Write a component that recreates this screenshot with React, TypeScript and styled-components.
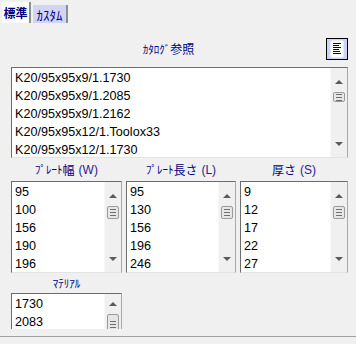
import styled, { createGlobalStyle } from "styled-components";

const GlobalStyle = createGlobalStyle`
  html, body {
    margin: 0;
    padding: 0;
    background: #f0f0f0;
  }
`;

const Window = styled.div`
  width: 356px;
  height: 344px;
  background: #f0f0f0;
  display: flex;
  flex-direction: column;
  overflow: hidden;
  font-family: "Liberation Sans", Arial, sans-serif;
`;

const TabStrip = styled.div`
  height: 23px;
  flex: none;
  display: flex;
  align-items: flex-end;
  gap: 2px;
  padding-left: 2px;
`;

const Tab = styled.div<{ $active?: boolean }>`
  box-sizing: border-box;
  height: ${(p) => (p.$active ? "21px" : "18px")};
  width: ${(p) => (p.$active ? "29px" : "35px")};
  display: flex;
  align-items: center;
  justify-content: center;
  background: ${(p) => (p.$active ? "#ffffff" : "#d0d4f6")};
  border-right: 2px solid #8e8e8e;
  color: #000080;
  font-family: "Noto Sans CJK JP", sans-serif;
  font-size: ${(p) => (p.$active ? "12px" : "13px")};
  font-weight: ${(p) => (p.$active ? 700 : 400)};
`;

const Content = styled.div`
  flex: none;
  display: flex;
  flex-direction: column;
  padding: 0 8px 0 11px;
`;

const CatalogHead = styled.div`
  height: 44px;
  box-sizing: border-box;
  padding: 15px 0 7px;
  display: flex;
  align-items: center;
`;

const Label = styled.div<{ $h?: number; $grow?: boolean }>`
  flex: ${(p) => (p.$grow ? "1" : "none")};
  height: ${(p) => p.$h ?? 22}px;
  display: flex;
  align-items: center;
  justify-content: center;
  color: #000080;
  font-family: "Noto Sans CJK JP", sans-serif;
  font-size: 11px;
  line-height: 1;
`;

const Kanji = styled.span`
  font-size: 12px;
`;

const Paren = styled.span`
  font-family: "Liberation Sans", Arial, sans-serif;
  font-size: 12px;
  color: #2a1896;
  margin-left: 4px;
`;

const IconButton = styled.div`
  width: 22px;
  height: 22px;
  box-sizing: border-box;
  border: 1px solid #000;
  background: #cdd3f7;
  display: flex;
  align-items: center;
  justify-content: center;
`;

const ListBox = styled.div<{ $h: number; $cut?: boolean }>`
  height: ${(p) => p.$h}px;
  flex: none;
  box-sizing: border-box;
  display: flex;
  background: #ffffff;
  border: 1px solid #a9a9a9;
  border-top-color: #6d6d6d;
  border-left-color: #6d6d6d;
  border-bottom: ${(p) => (p.$cut ? "none" : "1px solid #e3e3e3")};
  overflow: hidden;
`;

const Items = styled.div`
  flex: 1;
  padding: 1px 0 0 3px;
  min-width: 0;
`;

const Item = styled.div`
  height: 18px;
  line-height: 18px;
  font-size: 12.6px;
  color: #000;
  white-space: nowrap;
`;

const ScrollBar = styled.div`
  width: 16px;
  background: #f0f0f0;
  border-left: 1px solid #f7f7f7;
  display: flex;
  flex-direction: column;
  align-items: center;
`;

const Arrow = styled.div<{ $down?: boolean }>`
  height: 4px;
  width: 0;
  margin: ${(p) => (p.$down ? "auto 0 7px" : "8px 0 0")};
  border-left: 4px solid transparent;
  border-right: 4px solid transparent;
  ${(p) =>
    p.$down ? "border-top: 4px solid #5a5a5a;" : "border-bottom: 4px solid #5a5a5a;"}
`;

const Thumb = styled.div<{ $top: number; $h: number }>`
  margin-top: ${(p) => p.$top}px;
  width: 12px;
  height: ${(p) => p.$h}px;
  flex: none;
  box-sizing: border-box;
  border: 1px solid #9a9a9a;
  border-radius: 2px;
  background: #e6e6e6;
  display: flex;
  flex-direction: column;
  justify-content: center;
  align-items: center;
  gap: 2px;
`;

const Grip = styled.div`
  width: 6px;
  height: 1px;
  background: #6f6f6f;
`;

const Columns = styled.div`
  display: grid;
  grid-template-columns: 111px 110px 108px;
  column-gap: 4px;
`;

const Column = styled.div`
  display: flex;
  flex-direction: column;
`;

const Material = styled.div`
  width: 111px;
  display: flex;
  flex-direction: column;
`;

const Footer = styled.div`
  flex: none;
  height: 7px;
  border-bottom: 1px solid #a0a0a0;
`;

function List({
  items,
  height,
  thumbTop,
  thumbH,
  cut,
}: {
  items: string[];
  height: number;
  thumbTop: number;
  thumbH: number;
  cut?: boolean;
}) {
  return (
    <ListBox $h={height} $cut={cut}>
      <Items>
        {items.map((t) => (
          <Item key={t}>{t}</Item>
        ))}
      </Items>
      <ScrollBar>
        <Arrow />
        <Thumb $top={thumbTop} $h={thumbH}>
          <Grip />
          <Grip />
          <Grip />
        </Thumb>
        {!cut && <Arrow $down />}
      </ScrollBar>
    </ListBox>
  );
}

function DocIcon() {
  return (
    <svg width="14" height="18" viewBox="0 0 14 18">
      <rect x="0.5" y="0.5" width="13" height="17" rx="2" fill="#fff" stroke="#e8ebff" />
      <g fill="#000080">
        <rect x="3" y="3" width="8" height="1" />
        <rect x="3" y="5" width="6" height="1" />
        <rect x="3" y="7" width="8" height="1" />
        <rect x="3" y="9" width="6" height="1" />
        <rect x="3" y="11" width="7" height="1" />
        <rect x="3" y="13" width="8" height="1" />
      </g>
    </svg>
  );
}

const catalog = [
  "K20/95x95x9/1.1730",
  "K20/95x95x9/1.2085",
  "K20/95x95x9/1.2162",
  "K20/95x95x12/1.Toolox33",
  "K20/95x95x12/1.1730",
];

export default function App() {
  return (
    <Window>
      <GlobalStyle />
      <TabStrip>
        <Tab $active>標準</Tab>
        <Tab>ｶｽﾀﾑ</Tab>
      </TabStrip>
      <Content>
        <CatalogHead>
          <Label $grow>
            ｶﾀﾛｸﾞ<Kanji>参照</Kanji>
          </Label>
          <IconButton>
            <DocIcon />
          </IconButton>
        </CatalogHead>
        <List items={catalog} height={91} thumbTop={8} thumbH={10} />
        <Columns>
          <Column>
            <Label $h={23}>
              ﾌﾟﾚｰﾄ<Kanji>幅</Kanji>
              <Paren>(W)</Paren>
            </Label>
            <List items={["95", "100", "156", "190", "196"]} height={92} thumbTop={8} thumbH={13} />
          </Column>
          <Column>
            <Label $h={23}>
              ﾌﾟﾚｰﾄ<Kanji>長さ</Kanji>
              <Paren>(L)</Paren>
            </Label>
            <List items={["95", "130", "156", "196", "246"]} height={92} thumbTop={8} thumbH={13} />
          </Column>
          <Column>
            <Label $h={23}>
              <Kanji>厚さ</Kanji>
              <Paren>(S)</Paren>
            </Label>
            <List items={["9", "12", "17", "22", "27"]} height={92} thumbTop={8} thumbH={13} />
          </Column>
        </Columns>
        <Material>
          <Label $h={20}>ﾏﾃﾘｱﾙ</Label>
          <List items={["1730", "2083"]} height={36} thumbTop={8} thumbH={20} cut />
        </Material>
      </Content>
      <Footer />
    </Window>
  );
}
